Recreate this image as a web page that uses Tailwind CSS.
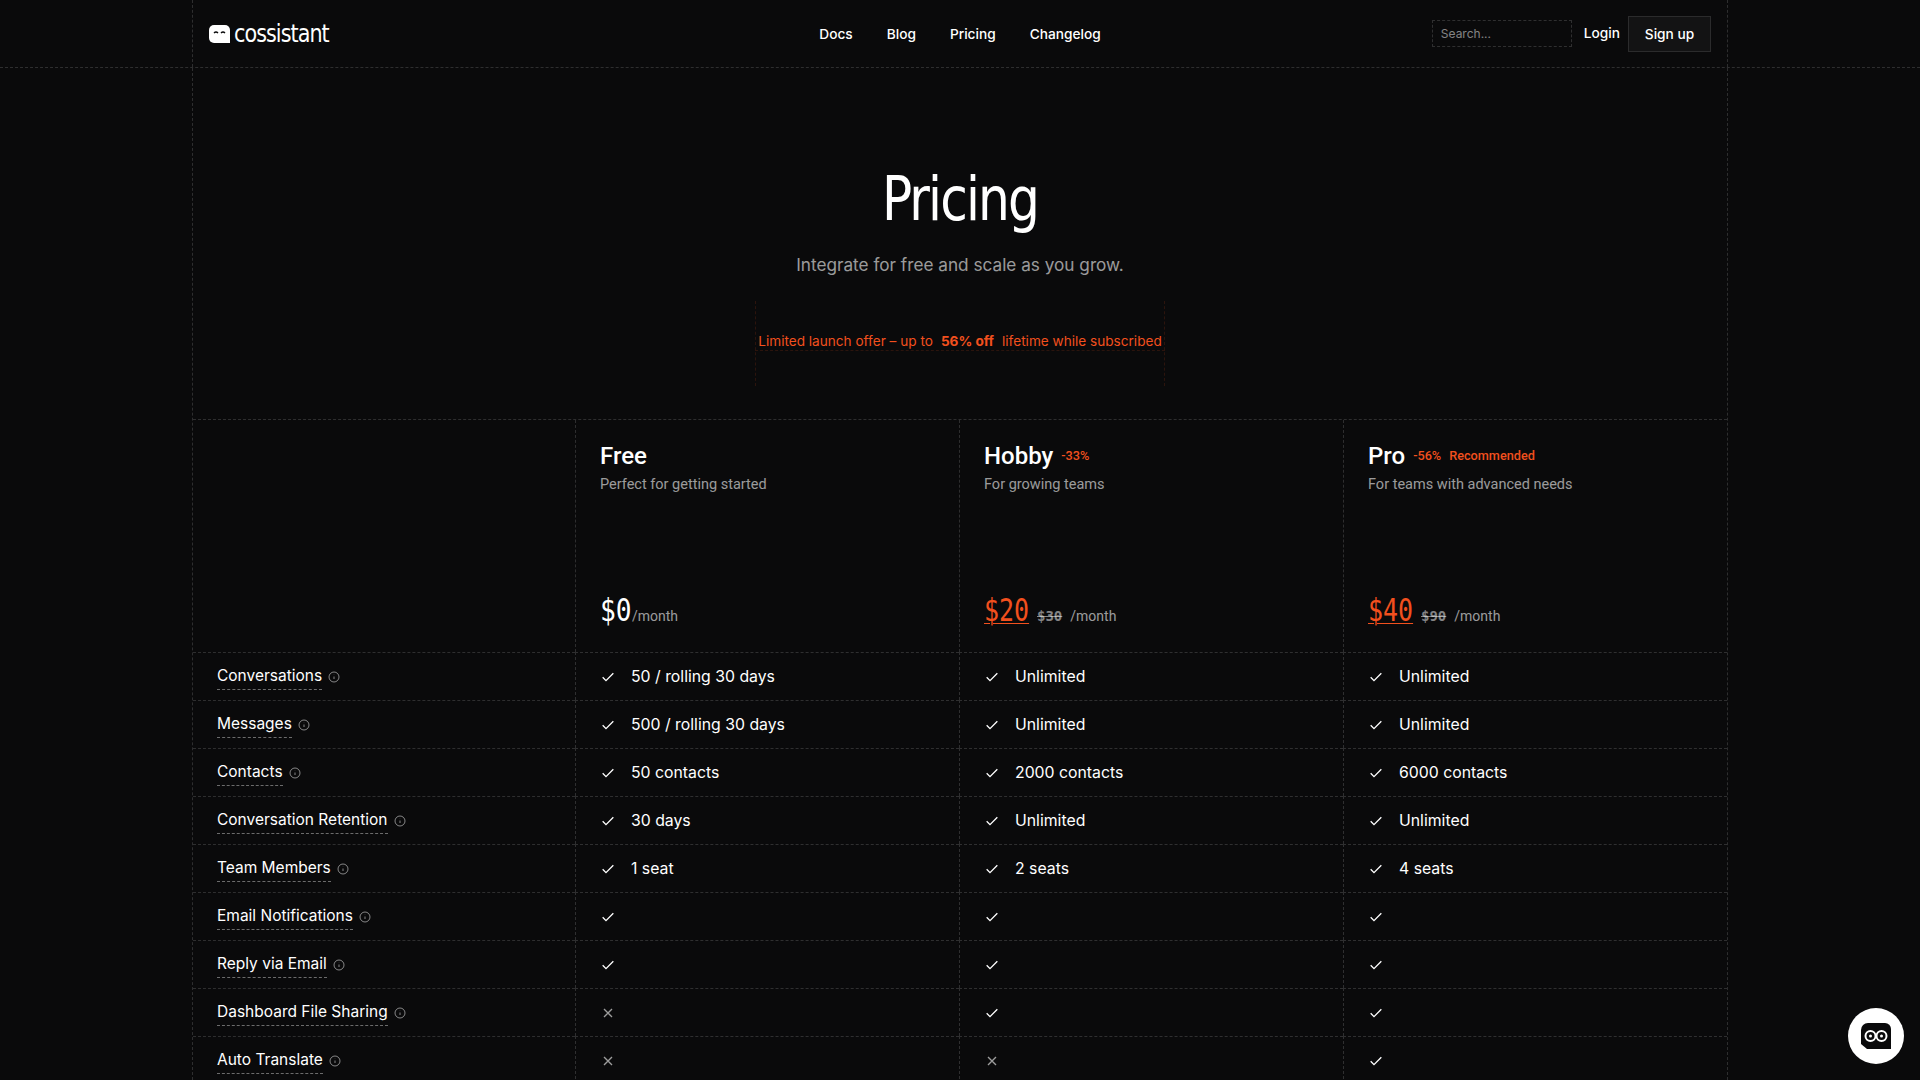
<!DOCTYPE html>
<html lang="en">

<head>
    <meta charset="UTF-8">
    <meta name="viewport" content="width=device-width, initial-scale=1.0">
    <script src="https://cdn.jsdelivr.net/npm/@tailwindcss/browser@4"></script>
    <title>Pricing - Cossistant</title>
</head>

<body class="bg-[#0a0a0b] h-screen overflow-hidden text-white font-['Inter',sans-serif] relative">

    <!-- nav -->
    <header class="h-[68px] border-b border-dashed border-white/15">
        <div class="w-[1536px] h-full mx-auto border-x border-dashed border-white/15 grid grid-cols-3 items-center pl-4 pr-4">
            <a class="flex items-center gap-[4px]">
                <svg class="w-[21px] h-[18px]" viewBox="0 0 21 18">
                    <path d="M5 0h11a5 5 0 0 1 5 5v13H5a5 5 0 0 1-5-5V5a5 5 0 0 1 5-5z" fill="#fff"/>
                    <path d="M5 8q2-2 4 0M12 8q2-2 4 0" stroke="#0a0a0b" stroke-width="1.4" fill="none"/>
                </svg>
                <span class="text-[24px] leading-none tracking-[-1px] font-['DejaVu_Sans'] [font-stretch:condensed] origin-left scale-x-[0.96]">cossistant</span>
            </a>
            <nav class="flex justify-center gap-[34px] text-[13.7px] font-medium pt-[1px]">
                <a>Docs</a>
                <a>Blog</a>
                <a>Pricing</a>
                <a>Changelog</a>
            </nav>
            <div class="flex items-center justify-end gap-[8px] text-[13.7px] font-medium">
                <div class="w-[140px] h-[27px] border border-dashed border-white/15 px-2 text-[12px] font-normal leading-[25px] text-white/50">Search...</div>
                <a class="ml-[4px]">Login</a>
                <a class="w-[83px] h-[36px] leading-[34px] text-center border border-white/10 bg-white/[0.04]">Sign up</a>
            </div>
        </div>
    </header>

    <main class="w-[1536px] mx-auto border-x border-dashed border-white/15 h-[1012px]">

        <!-- hero -->
        <section class="h-[351px] flex flex-col items-center">
            <h1 class="mt-[95px] text-[60px] leading-[72px] font-['DejaVu_Sans'] [font-stretch:condensed] font-normal tracking-[-2px] scale-x-[0.93]">Pricing</h1>
            <p class="mt-[16px] text-[17.2px] leading-[28px] text-white/60">Integrate for free and scale as you grow.</p>
            <div class="relative mt-[50px] w-[410px] h-[24px] flex items-center justify-center text-[13.6px] text-[#f2501e] whitespace-nowrap">
                <span class="absolute left-0 top-[-28px] h-[85px] border-l border-dashed border-[#f2501e]/15"></span>
                <span class="absolute right-0 top-[-28px] h-[85px] border-l border-dashed border-[#f2501e]/15"></span>
                <span class="absolute left-0 right-0 bottom-[2px] border-t border-dashed border-[#f2501e]/15"></span>
                <span>Limited launch offer – up to</span>
                <span class="font-bold mx-[8px]">56% off</span>
                <span>lifetime while subscribed</span>
            </div>
        </section>

        <!-- plans -->
        <div class="grid grid-cols-[382px_384px_384px_1fr] border-t border-dashed border-white/15 h-[233px]">
            <div></div>
            <div class="border-l border-dashed border-white/15 px-6 flex flex-col">
                <div class="mt-[22px] h-[28px] flex items-center gap-2">
                    <span class="text-[24px] font-medium font-['Roboto']">Free</span>
                </div>
                <p class="mt-[4px] text-[14.5px] font-['Roboto'] text-white/60">Perfect for getting started</p>
                <div class="mt-auto mb-[24px] flex items-baseline">
                    <span class="w-[32px] whitespace-nowrap"><span class="inline-block origin-left scale-x-[0.82] text-[32px] leading-[36px] font-['DejaVu_Sans_Mono']">$0</span></span>
                    <span class="text-[14px] text-white/60 font-['Roboto']">/month</span>
                </div>
            </div>
            <div class="border-l border-dashed border-white/15 px-6 flex flex-col">
                <div class="mt-[22px] h-[28px] flex items-center gap-2">
                    <span class="text-[24px] font-medium font-['Roboto']">Hobby</span>
                    <span class="text-[12.7px] font-medium text-[#f2501e] font-['Roboto']">-33%</span>
                </div>
                <p class="mt-[4px] text-[14.5px] font-['Roboto'] text-white/60">For growing teams</p>
                <div class="mt-auto mb-[24px] flex items-baseline gap-2">
                    <span class="w-[45px] whitespace-nowrap"><span class="inline-block origin-left scale-x-[0.78] text-[32px] leading-[36px] font-['DejaVu_Sans_Mono'] text-[#f2501e] underline underline-offset-2 decoration-1">$20</span></span>
                    <span class="text-[14px] font-bold font-['DejaVu_Sans_Mono'] text-white/50 line-through">$30</span>
                    <span class="text-[14px] text-white/60 font-['Roboto']">/month</span>
                </div>
            </div>
            <div class="border-l border-dashed border-white/15 px-6 flex flex-col">
                <div class="mt-[22px] h-[28px] flex items-center gap-2">
                    <span class="text-[24px] font-medium font-['Roboto']">Pro</span>
                    <span class="text-[12.7px] font-medium text-[#f2501e] font-['Roboto']">-56%</span>
                    <span class="text-[12.7px] font-medium text-[#f2501e] font-['Roboto']">Recommended</span>
                </div>
                <p class="mt-[4px] text-[14.5px] font-['Roboto'] text-white/60">For teams with advanced needs</p>
                <div class="mt-auto mb-[24px] flex items-baseline gap-2">
                    <span class="w-[45px] whitespace-nowrap"><span class="inline-block origin-left scale-x-[0.78] text-[32px] leading-[36px] font-['DejaVu_Sans_Mono'] text-[#f2501e] underline underline-offset-2 decoration-1">$40</span></span>
                    <span class="text-[14px] font-bold font-['DejaVu_Sans_Mono'] text-white/50 line-through">$90</span>
                    <span class="text-[14px] text-white/60 font-['Roboto']">/month</span>
                </div>
            </div>
        </div>

        <!-- features -->
        <div id="rows" class="grid grid-cols-[382px_384px_384px_1fr] auto-rows-[48px] text-[15.8px]">

            <div class="border-t border-dashed border-white/15 px-6 flex items-center gap-[6px] text-[15.5px]">
                <span class="border-b border-dashed border-white/40 leading-[26px]">Conversations</span>
                <svg class="w-3 h-3 text-white/50" viewBox="0 0 12 12" fill="none" stroke="currentColor"><circle cx="6" cy="6" r="5"/><path d="M6 8V5.500M6 4v-.2"/></svg>
            </div>
            <div class="border-t border-l border-dashed border-white/15 px-6 flex items-center gap-[15px]">
                <svg class="w-4 h-4" viewBox="0 0 24 24" fill="none" stroke="currentColor" stroke-width="2"><path d="M4 12.500l5 5L20 6.500"/></svg>50 / rolling 30 days
            </div>
            <div class="border-t border-l border-dashed border-white/15 px-6 flex items-center gap-[15px]">
                <svg class="w-4 h-4" viewBox="0 0 24 24" fill="none" stroke="currentColor" stroke-width="2"><path d="M4 12.500l5 5L20 6.500"/></svg>Unlimited
            </div>
            <div class="border-t border-l border-dashed border-white/15 px-6 flex items-center gap-[15px]">
                <svg class="w-4 h-4" viewBox="0 0 24 24" fill="none" stroke="currentColor" stroke-width="2"><path d="M4 12.500l5 5L20 6.500"/></svg>Unlimited
            </div>

            <div class="border-t border-dashed border-white/15 px-6 flex items-center gap-[6px] text-[15.5px]">
                <span class="border-b border-dashed border-white/40 leading-[26px]">Messages</span>
                <svg class="w-3 h-3 text-white/50" viewBox="0 0 12 12" fill="none" stroke="currentColor"><circle cx="6" cy="6" r="5"/><path d="M6 8V5.500M6 4v-.2"/></svg>
            </div>
            <div class="border-t border-l border-dashed border-white/15 px-6 flex items-center gap-[15px]">
                <svg class="w-4 h-4" viewBox="0 0 24 24" fill="none" stroke="currentColor" stroke-width="2"><path d="M4 12.500l5 5L20 6.500"/></svg>500 / rolling 30 days
            </div>
            <div class="border-t border-l border-dashed border-white/15 px-6 flex items-center gap-[15px]">
                <svg class="w-4 h-4" viewBox="0 0 24 24" fill="none" stroke="currentColor" stroke-width="2"><path d="M4 12.500l5 5L20 6.500"/></svg>Unlimited
            </div>
            <div class="border-t border-l border-dashed border-white/15 px-6 flex items-center gap-[15px]">
                <svg class="w-4 h-4" viewBox="0 0 24 24" fill="none" stroke="currentColor" stroke-width="2"><path d="M4 12.500l5 5L20 6.500"/></svg>Unlimited
            </div>

            <div class="border-t border-dashed border-white/15 px-6 flex items-center gap-[6px] text-[15.5px]">
                <span class="border-b border-dashed border-white/40 leading-[26px]">Contacts</span>
                <svg class="w-3 h-3 text-white/50" viewBox="0 0 12 12" fill="none" stroke="currentColor"><circle cx="6" cy="6" r="5"/><path d="M6 8V5.500M6 4v-.2"/></svg>
            </div>
            <div class="border-t border-l border-dashed border-white/15 px-6 flex items-center gap-[15px]">
                <svg class="w-4 h-4" viewBox="0 0 24 24" fill="none" stroke="currentColor" stroke-width="2"><path d="M4 12.500l5 5L20 6.500"/></svg>50 contacts
            </div>
            <div class="border-t border-l border-dashed border-white/15 px-6 flex items-center gap-[15px]">
                <svg class="w-4 h-4" viewBox="0 0 24 24" fill="none" stroke="currentColor" stroke-width="2"><path d="M4 12.500l5 5L20 6.500"/></svg>2000 contacts
            </div>
            <div class="border-t border-l border-dashed border-white/15 px-6 flex items-center gap-[15px]">
                <svg class="w-4 h-4" viewBox="0 0 24 24" fill="none" stroke="currentColor" stroke-width="2"><path d="M4 12.500l5 5L20 6.500"/></svg>6000 contacts
            </div>

            <div class="border-t border-dashed border-white/15 px-6 flex items-center gap-[6px] text-[15.5px]">
                <span class="border-b border-dashed border-white/40 leading-[26px]">Conversation Retention</span>
                <svg class="w-3 h-3 text-white/50" viewBox="0 0 12 12" fill="none" stroke="currentColor"><circle cx="6" cy="6" r="5"/><path d="M6 8V5.500M6 4v-.2"/></svg>
            </div>
            <div class="border-t border-l border-dashed border-white/15 px-6 flex items-center gap-[15px]">
                <svg class="w-4 h-4" viewBox="0 0 24 24" fill="none" stroke="currentColor" stroke-width="2"><path d="M4 12.500l5 5L20 6.500"/></svg>30 days
            </div>
            <div class="border-t border-l border-dashed border-white/15 px-6 flex items-center gap-[15px]">
                <svg class="w-4 h-4" viewBox="0 0 24 24" fill="none" stroke="currentColor" stroke-width="2"><path d="M4 12.500l5 5L20 6.500"/></svg>Unlimited
            </div>
            <div class="border-t border-l border-dashed border-white/15 px-6 flex items-center gap-[15px]">
                <svg class="w-4 h-4" viewBox="0 0 24 24" fill="none" stroke="currentColor" stroke-width="2"><path d="M4 12.500l5 5L20 6.500"/></svg>Unlimited
            </div>

            <div class="border-t border-dashed border-white/15 px-6 flex items-center gap-[6px] text-[15.5px]">
                <span class="border-b border-dashed border-white/40 leading-[26px]">Team Members</span>
                <svg class="w-3 h-3 text-white/50" viewBox="0 0 12 12" fill="none" stroke="currentColor"><circle cx="6" cy="6" r="5"/><path d="M6 8V5.500M6 4v-.2"/></svg>
            </div>
            <div class="border-t border-l border-dashed border-white/15 px-6 flex items-center gap-[15px]">
                <svg class="w-4 h-4" viewBox="0 0 24 24" fill="none" stroke="currentColor" stroke-width="2"><path d="M4 12.500l5 5L20 6.500"/></svg>1 seat
            </div>
            <div class="border-t border-l border-dashed border-white/15 px-6 flex items-center gap-[15px]">
                <svg class="w-4 h-4" viewBox="0 0 24 24" fill="none" stroke="currentColor" stroke-width="2"><path d="M4 12.500l5 5L20 6.500"/></svg>2 seats
            </div>
            <div class="border-t border-l border-dashed border-white/15 px-6 flex items-center gap-[15px]">
                <svg class="w-4 h-4" viewBox="0 0 24 24" fill="none" stroke="currentColor" stroke-width="2"><path d="M4 12.500l5 5L20 6.500"/></svg>4 seats
            </div>

            <div class="border-t border-dashed border-white/15 px-6 flex items-center gap-[6px] text-[15.5px]">
                <span class="border-b border-dashed border-white/40 leading-[26px]">Email Notifications</span>
                <svg class="w-3 h-3 text-white/50" viewBox="0 0 12 12" fill="none" stroke="currentColor"><circle cx="6" cy="6" r="5"/><path d="M6 8V5.500M6 4v-.2"/></svg>
            </div>
            <div class="border-t border-l border-dashed border-white/15 px-6 flex items-center">
                <svg class="w-4 h-4" viewBox="0 0 24 24" fill="none" stroke="currentColor" stroke-width="2"><path d="M4 12.500l5 5L20 6.500"/></svg>
            </div>
            <div class="border-t border-l border-dashed border-white/15 px-6 flex items-center">
                <svg class="w-4 h-4" viewBox="0 0 24 24" fill="none" stroke="currentColor" stroke-width="2"><path d="M4 12.500l5 5L20 6.500"/></svg>
            </div>
            <div class="border-t border-l border-dashed border-white/15 px-6 flex items-center">
                <svg class="w-4 h-4" viewBox="0 0 24 24" fill="none" stroke="currentColor" stroke-width="2"><path d="M4 12.500l5 5L20 6.500"/></svg>
            </div>

            <div class="border-t border-dashed border-white/15 px-6 flex items-center gap-[6px] text-[15.5px]">
                <span class="border-b border-dashed border-white/40 leading-[26px]">Reply via Email</span>
                <svg class="w-3 h-3 text-white/50" viewBox="0 0 12 12" fill="none" stroke="currentColor"><circle cx="6" cy="6" r="5"/><path d="M6 8V5.500M6 4v-.2"/></svg>
            </div>
            <div class="border-t border-l border-dashed border-white/15 px-6 flex items-center">
                <svg class="w-4 h-4" viewBox="0 0 24 24" fill="none" stroke="currentColor" stroke-width="2"><path d="M4 12.500l5 5L20 6.500"/></svg>
            </div>
            <div class="border-t border-l border-dashed border-white/15 px-6 flex items-center">
                <svg class="w-4 h-4" viewBox="0 0 24 24" fill="none" stroke="currentColor" stroke-width="2"><path d="M4 12.500l5 5L20 6.500"/></svg>
            </div>
            <div class="border-t border-l border-dashed border-white/15 px-6 flex items-center">
                <svg class="w-4 h-4" viewBox="0 0 24 24" fill="none" stroke="currentColor" stroke-width="2"><path d="M4 12.500l5 5L20 6.500"/></svg>
            </div>

            <div class="border-t border-dashed border-white/15 px-6 flex items-center gap-[6px] text-[15.5px]">
                <span class="border-b border-dashed border-white/40 leading-[26px]">Dashboard File Sharing</span>
                <svg class="w-3 h-3 text-white/50" viewBox="0 0 12 12" fill="none" stroke="currentColor"><circle cx="6" cy="6" r="5"/><path d="M6 8V5.500M6 4v-.2"/></svg>
            </div>
            <div class="border-t border-l border-dashed border-white/15 px-6 flex items-center">
                <svg class="w-4 h-4 text-white/60" viewBox="0 0 24 24" fill="none" stroke="currentColor" stroke-width="2"><path d="M6 6l12 12M18 6L6 18"/></svg>
            </div>
            <div class="border-t border-l border-dashed border-white/15 px-6 flex items-center">
                <svg class="w-4 h-4" viewBox="0 0 24 24" fill="none" stroke="currentColor" stroke-width="2"><path d="M4 12.500l5 5L20 6.500"/></svg>
            </div>
            <div class="border-t border-l border-dashed border-white/15 px-6 flex items-center">
                <svg class="w-4 h-4" viewBox="0 0 24 24" fill="none" stroke="currentColor" stroke-width="2"><path d="M4 12.500l5 5L20 6.500"/></svg>
            </div>

            <div class="border-t border-dashed border-white/15 px-6 flex items-center gap-[6px] text-[15.5px]">
                <span class="border-b border-dashed border-white/40 leading-[26px]">Auto Translate</span>
                <svg class="w-3 h-3 text-white/50" viewBox="0 0 12 12" fill="none" stroke="currentColor"><circle cx="6" cy="6" r="5"/><path d="M6 8V5.500M6 4v-.2"/></svg>
            </div>
            <div class="border-t border-l border-dashed border-white/15 px-6 flex items-center">
                <svg class="w-4 h-4 text-white/60" viewBox="0 0 24 24" fill="none" stroke="currentColor" stroke-width="2"><path d="M6 6l12 12M18 6L6 18"/></svg>
            </div>
            <div class="border-t border-l border-dashed border-white/15 px-6 flex items-center">
                <svg class="w-4 h-4 text-white/60" viewBox="0 0 24 24" fill="none" stroke="currentColor" stroke-width="2"><path d="M6 6l12 12M18 6L6 18"/></svg>
            </div>
            <div class="border-t border-l border-dashed border-white/15 px-6 flex items-center">
                <svg class="w-4 h-4" viewBox="0 0 24 24" fill="none" stroke="currentColor" stroke-width="2"><path d="M4 12.500l5 5L20 6.500"/></svg>
            </div>
        </div>
    </main>

    <!-- support widget -->
    <button class="absolute right-[16px] bottom-[16px] w-14 h-14 rounded-full bg-white flex items-center justify-center">
        <svg class="w-[30px] h-[26px]" viewBox="0 0 30 26">
            <path d="M7 0h17a6 6 0 0 1 6 6v20H6l-6-5V7a7 7 0 0 1 7-7z" fill="#0a0a0b"/>
            <circle cx="9.500" cy="13" r="5" fill="none" stroke="#fff" stroke-width="2"/>
            <circle cx="20.500" cy="13" r="5" fill="none" stroke="#fff" stroke-width="2"/>
            <circle cx="9.500" cy="13" r="1.500" fill="#fff"/>
            <circle cx="20.500" cy="13" r="1.500" fill="#fff"/>
        </svg>
    </button>

</body>

</html>
